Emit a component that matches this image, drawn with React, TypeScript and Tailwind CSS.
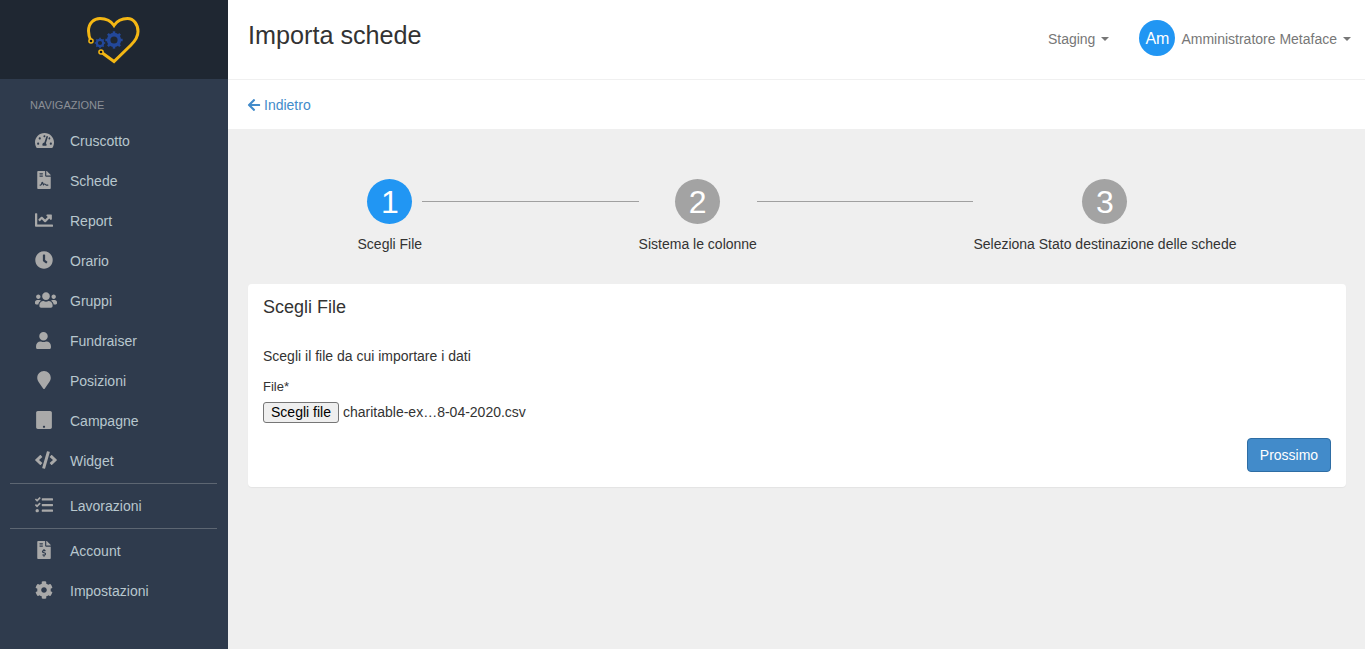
import {
  FaCode,
  FaCog,
  FaArrowLeft,
  FaChartLine,
  FaClock,
  FaFileContract,
  FaFileInvoiceDollar,
  FaMapMarker,
  FaTablet,
  FaTachometerAlt,
  FaTasks,
  FaUser,
  FaUsers,
} from "react-icons/fa";

const navTop = [
  { label: "Cruscotto", icon: <FaTachometerAlt className="h-[19px] w-auto" /> },
  { label: "Schede", icon: <FaFileContract className="h-[18px] w-auto" /> },
  { label: "Report", icon: <FaChartLine className="h-[18px] w-auto" /> },
  { label: "Orario", icon: <FaClock className="h-[18px] w-auto" /> },
  { label: "Gruppi", icon: <FaUsers className="h-[22px] w-auto" /> },
  { label: "Fundraiser", icon: <FaUser className="h-[17px] w-auto" /> },
  { label: "Posizioni", icon: <FaMapMarker className="h-[18px] w-auto" /> },
  { label: "Campagne", icon: <FaTablet className="h-[18px] w-auto" /> },
  { label: "Widget", icon: <FaCode className="h-[22px] w-auto" /> },
];

const steps = [
  { n: 1, label: "Scegli File", active: true },
  { n: 2, label: "Sistema le colonne", active: false },
  { n: 3, label: "Seleziona Stato destinazione delle schede", active: false },
];

function NavItem({ label, icon }: { label: string; icon: React.ReactNode }) {
  return (
    <div className="flex h-10 items-center pl-[35px] text-[14px] text-[#b8c7ce]">
      <span className="-mt-[2px] flex w-[35px] shrink-0 items-center text-[#a9a9a9]">{icon}</span>
      {label}
    </div>
  );
}

function Gear({ cx, cy, r, w }: { cx: number; cy: number; r: number; w: number }) {
  return (
    <g stroke="#23489a" fill="none">
      <circle cx={cx} cy={cy} r={r} strokeWidth={w} />
      {[0, 45, 90, 135, 180, 225, 270, 315].map((a) => (
        <line
          key={a}
          x1={cx}
          y1={cy - r}
          x2={cx}
          y2={cy - r - w * 0.9}
          strokeWidth={w * 0.7}
          transform={`rotate(${a} ${cx} ${cy})`}
        />
      ))}
    </g>
  );
}

function Logo() {
  return (
    <svg width="60" height="54" viewBox="84 12 60 54" className="block">
      <path
        d="M91 40C89 36 88.500 33 88.500 30C88.500 22 94 17.500 100 17.500C106 17.500 111 20 114 24.500C117 20 122 17.500 127.500 17.500C133.500 17.500 138 23 138 30.500C138 36 135 40 131 44L114 60.500L101 51"
        fill="none"
        stroke="#f4b714"
        strokeWidth="3"
      />
      <Gear cx={114} cy={39} r={5.400} w={3.600} />
      <Gear cx={100} cy={42} r={3.200} w={2.200} />
      <circle cx={91} cy={40} r={2.800} fill="#f4b714" />
      <circle cx={91} cy={40} r={1.300} fill="#10151c" />
      <circle cx={101} cy={51} r={2.800} fill="#f4b714" />
      <circle cx={101} cy={51} r={1.300} fill="#10151c" />
    </svg>
  );
}

function Caret() {
  return <span className="ml-[6px] inline-block border-x-4 border-t-4 border-x-transparent border-t-[#777]" />;
}

export default function App() {
  return (
    <div className="flex min-h-[649px] font-['Liberation_Sans',Arial,sans-serif] text-[14px] text-[#333]">
      <aside className="flex w-[228px] shrink-0 flex-col bg-[#2f3b4d]">
        <div className="flex h-[79px] items-center justify-center bg-[#1f2732]">
          <Logo />
        </div>
        <div className="pb-[6px] pl-[30px] pt-[19px] text-[11px] leading-[14px] text-[#8b8f96]">NAVIGAZIONE</div>
        <div className="h-[3px]" />
        <nav>
          {navTop.map((item) => (
            <NavItem key={item.label} {...item} />
          ))}
          <div className="my-[2px] ml-[10px] mr-[11px] border-t border-[#5d6672]" />
          <NavItem label="Lavorazioni" icon={<FaTasks className="h-[18px] w-auto" />} />
          <div className="my-[2px] ml-[10px] mr-[11px] border-t border-[#5d6672]" />
          <NavItem label="Account" icon={<FaFileInvoiceDollar className="h-[18px] w-auto" />} />
          <NavItem label="Impostazioni" icon={<FaCog className="h-[18px] w-auto" />} />
        </nav>
      </aside>

      <main className="flex min-w-0 flex-1 flex-col bg-[#efefef]">
        <header className="flex h-[80px] items-start justify-between border-b border-[#f0f0f0] bg-white pl-5 pr-[14px]">
          <h1 className="pt-[20px] text-[25.2px] font-normal leading-[30px]">Importa schede</h1>
          <div className="flex items-center pt-[20px] text-[#777]">
            <span className="flex items-center pt-[2px]">
              Staging
              <Caret />
            </span>
            <span className="ml-[30px] flex h-9 w-9 items-center justify-center rounded-full bg-[#2196f3] pt-[2px] text-[16px] text-white">
              Am
            </span>
            <span className="ml-[6px] flex items-center pt-[2px]">
              Amministratore Metaface
              <Caret />
            </span>
          </div>
        </header>

        <div className="flex h-[49px] items-center bg-white pl-5 pt-[1px] text-[#428bca]">
          <FaArrowLeft className="-ml-[1px] mr-[3px] h-[14px] w-[14px]" />
          Indietro
        </div>

        <div className="flex-1 pl-5 pr-[19px] pt-[50px]">
          <div className="flex justify-center">
            {steps.map((step, i) => (
              <div key={step.n} className="flex">
                <div className="flex flex-col items-center">
                  <div
                    className={
                      step.active
                        ? "flex h-[45px] w-[45px] items-center justify-center rounded-full bg-[#2196f3] text-[32px] text-white"
                        : "flex h-[45px] w-[45px] items-center justify-center rounded-full bg-[#a3a3a3] text-[32px] text-white"
                    }
                  >
                    {step.n}
                  </div>
                  <div className="mt-[10px] whitespace-nowrap leading-[20px]">{step.label}</div>
                </div>
                {i < 2 && <div className="mt-[22px] h-px w-[216.5px] bg-[#a0a0a0]" />}
              </div>
            ))}
          </div>

          <section className="mt-[30px] h-[203px] rounded bg-white px-[15px] pt-[13px] shadow-[0_1px_1px_rgba(0,0,0,0.05)]">
            <h2 className="text-[18px] font-normal leading-[20px]">Scegli File</h2>
            <p className="mt-[29px] leading-[20px]">Scegli il file da cui importare i dati</p>
            <div className="mt-[11px] text-[13px] leading-[20px]">File*</div>
            <div className="mt-[5px] flex items-center">
              <span className="flex h-[21px] w-[76px] items-center justify-center rounded-[3px] border border-[#767676] bg-[#efefef] text-black">
                Scegli file
              </span>
              <span className="ml-1">charitable-ex…8-04-2020.csv</span>
            </div>
            <div className="mt-[15px] flex justify-end">
              <button className="h-[34px] w-[84px] rounded border border-[#2e6da4] bg-[#428bca] text-white">
                Prossimo
              </button>
            </div>
          </section>
        </div>
      </main>
    </div>
  );
}
